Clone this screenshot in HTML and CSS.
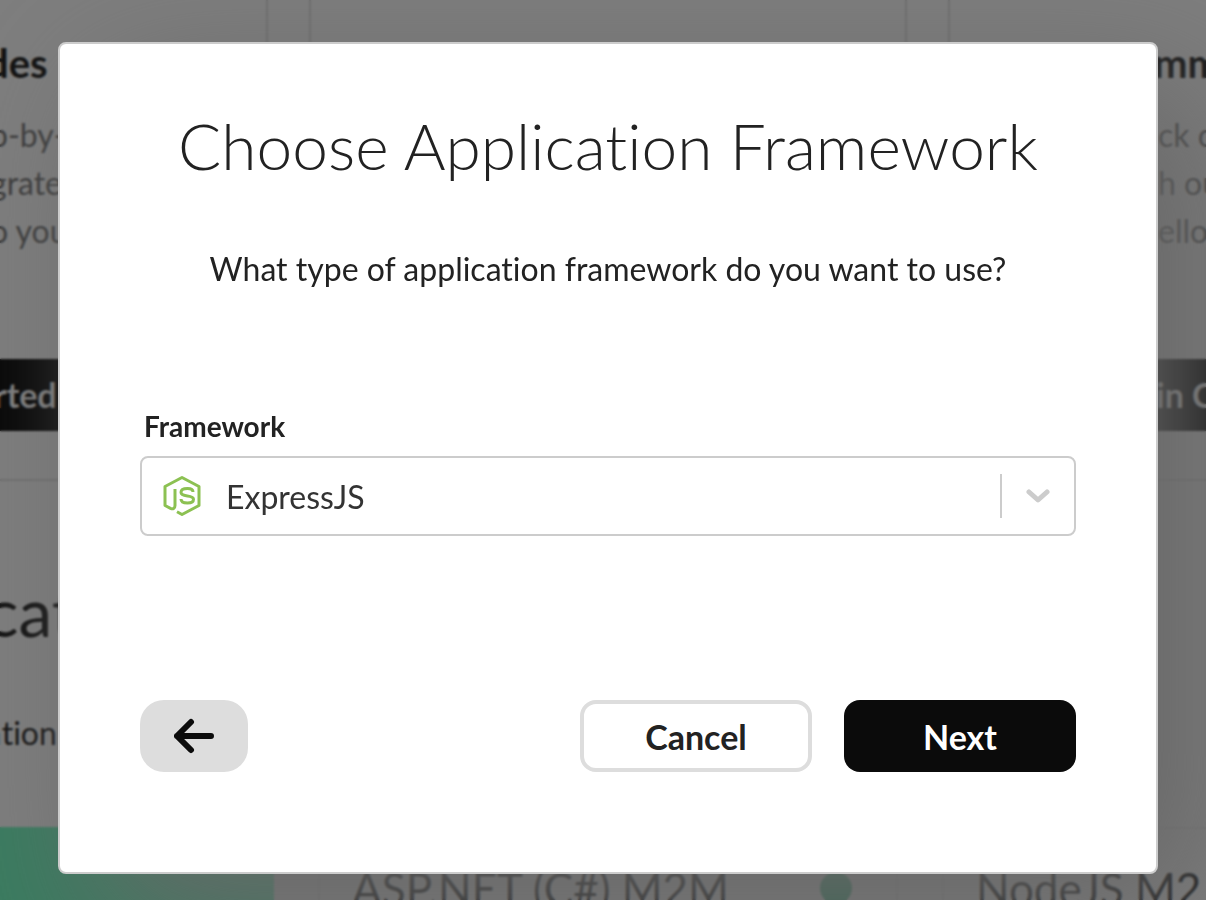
FILE: index.html
```html
<!DOCTYPE html>
<html lang="en">
<head>
<meta charset="utf-8">
<title>Choose Application Framework</title>
<meta name="viewport" content="width=device-width, initial-scale=1">
<link rel="stylesheet" href="styles.css">
</head>

<body>
<div class="page" aria-hidden="true">
	<div class="cards">
		<div class="card card-left">
			<h3>des</h3>
			<p>p-by-<br>grate<br>o you</p>
			<div class="card-btn">rted</div>
		</div>
		<div class="card"></div>
		<div class="card card-right">
			<h3>mm</h3>
			<p>ck o<br>h ou<br>ello</p>
			<div class="card-btn">in C</div>
		</div>
	</div>

	<div class="intro">
		<h2>cat</h2>
		<p>ation</p>
	</div>

	<div class="cards apps">
		<div class="app app-selected"></div>
		<div class="app"><span>ASP.NET (C#) M2M</span><i class="dot"></i></div>
		<div class="app"><span>NodeJS M2</span></div>
	</div>
</div>

<div class="overlay">
	<form class="modal" role="dialog" aria-labelledby="title">
		<h1 id="title">Choose Application Framework</h1>
		<p class="question">What type of application framework do you want to use?</p>

		<label for="framework">Framework</label>
		<div class="select">
			<svg class="node" viewBox="0 0 40 42" width="40" height="42" fill="none" stroke="#8cc152" stroke-width="3" stroke-linejoin="round">
				<path d="M13 14v16.500c0 3-2 4-4.500 2.800L3 30.500V11.500L20 2.500l17 9v19L20 39.500l-5-2.800"/>
				<path d="M31 17c0-2.500-2-3.500-5.500-3.500S19 14.500 19 17.300c0 5.700 12.500 1.700 12.500 7 0 2.700-2.500 3.700-6 3.700s-6.500-1-6.500-4"/>
			</svg>
			<select id="framework" name="framework">
				<option>ExpressJS</option>
			</select>
			<span class="indicator">
				<svg viewBox="0 0 24 14" width="24" height="14" fill="none" stroke="#ccc" stroke-width="5" stroke-linecap="round" stroke-linejoin="round">
					<path d="M3 3l9 8 9-8"/>
				</svg>
			</span>
		</div>

		<div class="buttons">
			<button type="button" class="back" aria-label="Back">
				<svg viewBox="0 0 40 36" width="40" height="36" fill="none" stroke="#0b0b0b" stroke-width="6" stroke-linecap="round" stroke-linejoin="round">
					<path d="M37 18H3M17 4L3 18l14 14"/>
				</svg>
			</button>
			<button type="button" class="cancel">Cancel</button>
			<button type="submit" class="next">Next</button>
		</div>
	</form>
</div>
</body>
</html>
```
FILE: styles.css
```css
* { box-sizing: border-box; }

body {
	margin: 0;
	height: 100vh;
	overflow: hidden;
	background: #fff;
	color: #222;
	font-family: Lato, "Liberation Sans", sans-serif;
	font-size: 32px;
	font-variant-ligatures: none;
}

h1, h2, h3, p { margin: 0; }

/* page behind the dialog */
.page {
	height: 100vh;
	overflow: hidden;
	white-space: nowrap;
}

.cards {
	display: grid;
	grid-template-columns: repeat(3, 598px);
	gap: 41px;
	justify-content: center;
	padding-left: 10px;
}

.card {
	height: 481px;
	padding-top: 39px;
	overflow: hidden;
	border: 2px solid #e0e0e0;
	border-top: 0;
}

.card-left { padding-left: 314px; }
.card-right { padding-left: 204px; }

.card h3 {
	font-size: 40px;
	line-height: 48px;
	font-weight: 700;
}

.card p {
	margin: 24px 0 0 4px;
	line-height: 48px;
	color: #777;
}

.card-btn {
	height: 72px;
	margin: 104px 0 0 -200px;
	padding-left: 208px;
	background: #0b0b0b;
	color: #fff;
	font-size: 34px;
	font-weight: 700;
	line-height: 72px;
}

.card-right .card-btn { padding-left: 202px; }

.intro {
	height: 346px;
	padding-top: 90px;
	margin-left: -14px;
}

.intro h2 {
	font-size: 68px;
	line-height: 80px;
	font-weight: 400;
}

.intro p {
	margin-top: 60px;
	line-height: 44px;
}

.apps {
	grid-template-columns: repeat(3, 580px);
	gap: 44px;
}

.app {
	display: flex;
	justify-content: space-between;
	align-items: center;
	height: 122px;
	padding: 0 44px 0 32px;
	border: 2px solid #eee;
	font-size: 44px;
}

.app-selected {
	border: 0;
	background: #76fac2;
}

.dot {
	width: 32px;
	height: 32px;
	border-radius: 50%;
	background: #5cc89a;
}

/* dialog */
.overlay {
	position: fixed;
	inset: 0;
	padding: 42px 0 0 10px;
	background: rgba(0, 0, 0, .51);
	backdrop-filter: blur(1px);
}

.modal {
	max-width: 1100px;
	margin: 0 auto;
	padding: 62px 80px 100px;
	background: #fff;
	border: 2px solid #ccc;
	border-radius: 8px;
	box-shadow: 44px 44px 140px #686868;
}

.modal h1 {
	font-size: 64px;
	line-height: 80px;
	font-weight: 300;
	text-align: center;
}

.question {
	margin-top: 63px;
	line-height: 40px;
	text-align: center;
}

.modal label {
	display: block;
	margin: 121px 0 14px 4px;
	font-size: 28px;
	line-height: 32px;
	font-weight: 700;
}

.select {
	display: flex;
	align-items: center;
	position: relative;
	height: 80px;
	border: 2px solid #ccc;
	border-radius: 8px;
}

.node {
	position: absolute;
	left: 20px;
	pointer-events: none;
}

.select select {
	flex: 1;
	height: 76px;
	padding: 0 84px;
	border: 0;
	border-radius: 8px;
	background: none;
	appearance: none;
	color: #333;
	font: inherit;
}

.indicator {
	position: absolute;
	right: 0;
	display: flex;
	align-items: center;
	justify-content: center;
	width: 74px;
	height: 44px;
	border-left: 2px solid #ccc;
	pointer-events: none;
}

.buttons {
	display: flex;
	gap: 32px;
	margin-top: 164px;
}

.buttons button {
	width: 232px;
	height: 72px;
	padding: 0;
	border: 0;
	border-radius: 16px;
	font: inherit;
	font-size: 34px;
	font-weight: 700;
}

.buttons .back {
	display: flex;
	align-items: center;
	justify-content: center;
	width: 108px;
	margin-right: auto;
	border-radius: 24px;
	background: #ddd;
}

.buttons .cancel {
	border: 4px solid #ddd;
	background: #fff;
	color: #222;
}

.buttons .next {
	background: #0b0b0b;
	color: #fff;
}
```
